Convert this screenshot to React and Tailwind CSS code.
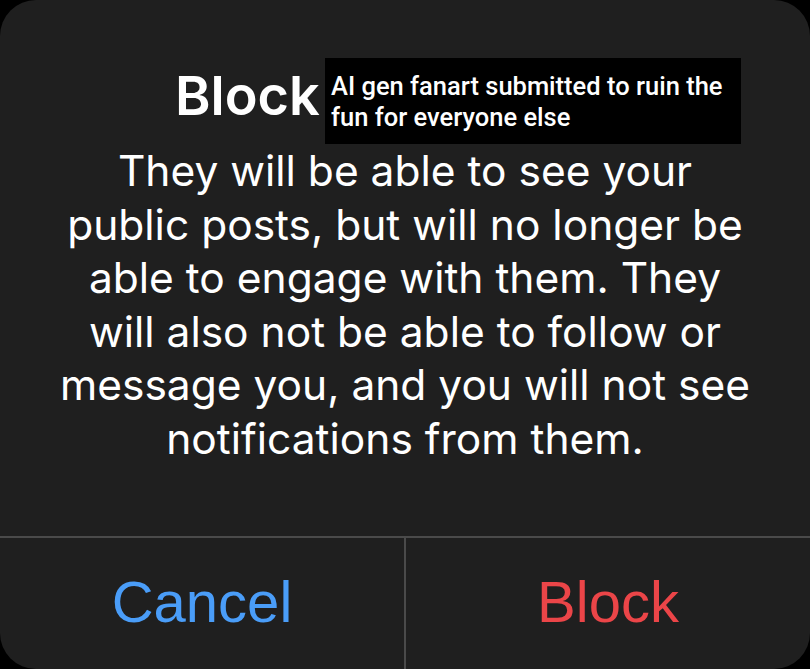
export default function App() {
  return (
    <div className="w-[810px] h-[669px] bg-black overflow-hidden">
      <div className="w-full h-full bg-[#1f1f1f] rounded-[36px] flex flex-col">
        <div className="relative h-[536px] flex flex-col">
          <div className="h-[144px] flex items-end pl-[175px] pb-[21px]">
            <span className="text-[54px] leading-none font-semibold text-white font-['Inter',sans-serif]">Block</span>
          </div>
          <div className="absolute left-[325px] top-[58px] w-[416px] h-[86px] bg-black px-[6px] pt-[13px] text-white font-['Roboto',sans-serif] font-medium text-[25.5px] leading-[31px] whitespace-nowrap">
            AI gen fanart submitted to ruin the<br />fun for everyone else
          </div>
          <p className="text-center text-white text-[42.5px] leading-[53.5px] font-['Inter',sans-serif] px-[20px] whitespace-nowrap">
            They will be able to see your<br />
            public posts, but will no longer be<br />
            able to engage with them. They<br />
            will also not be able to follow or<br />
            message you, and you will not see<br />
            notifications from them.
          </p>
        </div>
        <div className="h-[2px] bg-[#4a4a4a]" />
        <div className="flex-1 flex">
          <div className="flex-1 flex items-center justify-center text-[#4a9df8] text-[58px] font-['Liberation_Sans',sans-serif] pb-[4px]">Cancel</div>
          <div className="w-[2px] bg-[#4a4a4a]" />
          <div className="flex-1 flex items-center justify-center text-[#eb4548] text-[58px] font-['Liberation_Sans',sans-serif] pb-[4px]">Block</div>
        </div>
      </div>
    </div>
  );
}
